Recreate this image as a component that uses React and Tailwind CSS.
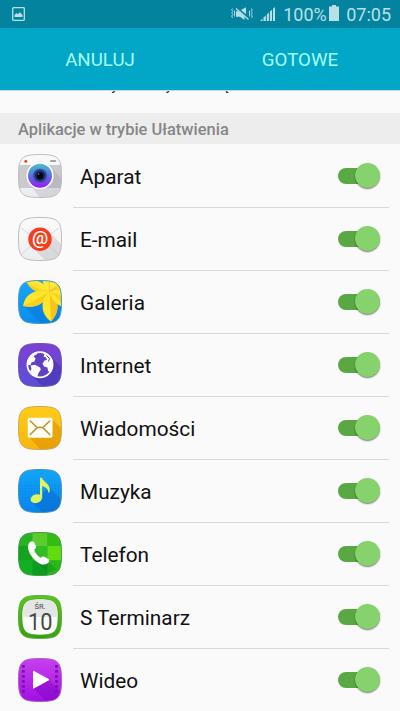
const SQUIRCLE = 'M22 .5C40.3 .5 43.5 3.7 43.5 22S40.3 43.5 22 43.5.5 40.3.5 22 3.7.5 22 .5Z';

const Tile = ({ id, from, to, edge, children }) => (
  <svg viewBox="0 0 44 44" className="size-11 shrink-0">
    <defs>
      <linearGradient id={`${id}-bg`} x1="0" y1="0" x2="0" y2="1">
        <stop offset="0" stopColor={from} />
        <stop offset="1" stopColor={to} />
      </linearGradient>
      <clipPath id={`${id}-clip`}>
        <path d={SQUIRCLE} />
      </clipPath>
    </defs>
    <path d={SQUIRCLE} fill={`url(#${id}-bg)`} />
    <g clipPath={`url(#${id}-clip)`}>{children}</g>
    <path d={SQUIRCLE} fill="none" stroke={edge} strokeWidth="1" />
  </svg>
);

const CameraIcon = () => (
  <Tile id="camera" from="#fafafa" to="#ececf0" edge="#bdbdbd">
    <defs>
      <linearGradient id="camera-lens" x1="0" y1="0" x2="0" y2="1">
        <stop offset="0" stopColor="#48c0c8" />
        <stop offset="0.45" stopColor="#5a78e0" />
        <stop offset="1" stopColor="#9818f8" />
      </linearGradient>
    </defs>
    <rect y="11" width="44" height="23" fill="#c9c9ce" />
    <path d="M31 12L44 25V44H22L13 32Z" fill="#8c8c9c" opacity="0.25" />
    <circle cx="22" cy="21.7" r="13.6" fill="#fff" />
    <circle cx="22" cy="21.7" r="12" fill="url(#camera-lens)" />
    <circle cx="22" cy="21.7" r="7" fill="#304a9c" />
    <circle cx="22" cy="21.7" r="5" fill="#202058" />
    <circle cx="22" cy="21.7" r="3.2" fill="#050510" />
    <circle cx="20.5" cy="20" r="0.8" fill="#6a88c8" />
    <circle cx="7.8" cy="7.2" r="1.5" fill="#f04830" />
    <rect x="32" y="6" width="6.2" height="2" rx="0.8" fill="#a4a4ac" />
  </Tile>
);

const MailIcon = () => (
  <Tile id="mail" from="#fbfbfb" to="#ededed" edge="#bdbdbd">
    <path d="M3 11L22 25 41 11M3 38L14 28M41 38L30 28" fill="none" stroke="#cfcfcf" strokeWidth="0.8" />
    <path d="M30.5 14L43 27V43H27L14 30.5Z" fill="#999" opacity="0.25" />
    <circle cx="22" cy="22.3" r="11.7" fill="#f73d1c" />
    <text x="22" y="27.2" textAnchor="middle" fontSize="18" fontWeight="500" fill="#fff" fontFamily="Roboto, sans-serif">
      @
    </text>
  </Tile>
);

const GalleryIcon = () => (
  <Tile id="gallery" from="#1aa6f6" to="#0a8cf0" edge="#4b9cc4">
    <path d="M6 26L31 12 44 25V44H24Z" fill="#0670d0" opacity="0.4" />
    <path d="M31.5 11.5C26 0 15-1 8 1C12 10 22 15 31.5 11.5Z" fill="#ffe52c" />
    <path d="M31.5 11.5C22 10 14 7 8 1C12 10 22 15 31.5 11.5Z" fill="#fbd01c" />
    <path d="M31.5 11.5C19 8 7 13 5 26C18 29 28 23 31.5 11.5Z" fill="#ffe52c" />
    <path d="M31.5 11.5C22 17 12 23 5 26C18 29 28 23 31.5 11.5Z" fill="#fbd01c" />
    <path d="M31.5 11.5C22 20 22 34 33 41.5C42 32 42 20 31.5 11.5Z" fill="#ffe52c" />
    <path d="M31.5 11.5C32 22 33 32 33 41.5C42 32 42 20 31.5 11.5Z" fill="#f9c216" />
    <path d="M31.5 11.5C33 20 38 25 46 27V12C41 9 36 9 31.5 11.5Z" fill="#ffe52c" />
    <path d="M31.5 11.5C36 14 42 21 46 27V17Z" fill="#fbd01c" />
    <path d="M31.5 11.5C34 4 39 0 46-2V13C41 9 36 9 31.5 11.5Z" fill="#ffd91c" />
    <path d="M31.5 11.5C26 6 24 2 25-2H41C40 4 35 8 31.5 11.5Z" fill="#ffea3c" />
    <path d="M31.5 11.5L44 4M31.5 11.5L31-1" stroke="#f6be1c" strokeWidth="0.8" />
  </Tile>
);

const InternetIcon = () => (
  <Tile id="internet" from="#7b40d2" to="#5a50d6" edge="#6a58bc">
    <path d="M32 13L44 25V44H25L13 32Z" fill="#38249c" opacity="0.4" />
    <circle cx="22" cy="21.7" r="12.6" fill="#633fc4" stroke="#fdfdfe" strokeWidth="1.8" />
    <g fill="#fdfdfe">
      <path d="M9.5 18.5C11 12.5 15 9 20 8.8L18.5 11.5 15.5 13 17.5 15.5 16.5 18.5 13.5 19.5 12.5 22 9 22Z" />
      <path d="M12.5 22.5L17 21.8 22 24.5 22.8 26.5 20.5 30 19 34.5C15.5 33.5 13 31 12 28.5L13.5 26Z" />
      <path d="M24 8.8C29 9.5 34 13.5 35 19L35 24 32.5 29.5 30 28 29.5 24.5 26 23.5 24.5 20.5 26.5 17.5 29 17 28 14.5 25.5 13.5 26.5 11.5Z" />
    </g>
    <path d="M28.5 12.5L31.5 15.5 30.5 18.5" fill="none" stroke="#633fc4" strokeWidth="1" />
  </Tile>
);

const MessagesIcon = () => (
  <Tile id="messages" from="#ffcc18" to="#f7b60c" edge="#c8a860">
    <path d="M34 13L44 23V44H23L11 31Z" fill="#d88c00" opacity="0.5" />
    <rect x="9.7" y="11.7" width="24.8" height="20" rx="1.6" fill="#fffdf4" />
    <path
      d="M12.3 15L19.2 21.6H24.8L31.7 15M12.3 28.5L19.2 21.6M31.7 28.5L24.8 21.6"
      fill="none"
      stroke="#bd902c"
      strokeWidth="1.5"
      strokeLinecap="round"
    />
  </Tile>
);

const MusicIcon = () => (
  <Tile id="music" from="#12a4f8" to="#0886ee" edge="#4a90c0">
    <defs>
      <pattern id="music-dots" width="3" height="3" patternUnits="userSpaceOnUse">
        <circle cx="1.5" cy="1.5" r="0.7" fill="#0870d8" opacity="0.5" />
      </pattern>
    </defs>
    <rect y="14" width="44" height="30" fill="url(#music-dots)" />
    <path d="M31 18L44 31V44H25L15 34 24 25Z" fill="#0660c0" opacity="0.4" />
    <ellipse cx="18.3" cy="29.7" rx="5.8" ry="4.3" transform="rotate(-18 18.3 29.7)" fill="#dcf560" />
    <path
      d="M22 8.7H24C25 13 32.5 14.5 31.8 21.5C31.5 23 31 23.5 30.3 24C30.5 19.5 27 17.7 24.2 17.2V29.5L22 28Z"
      fill="#dcf560"
    />
  </Tile>
);

const PhoneIcon = () => (
  <Tile id="phone" from="#2cbc24" to="#10a020" edge="#4a9c44">
    <rect width="14.5" height="14" fill="#24b424" />
    <rect x="14.5" width="15" height="14" fill="#5ccc2c" />
    <rect x="29.5" width="15" height="14" fill="#32bc14" />
    <rect y="14" width="14.5" height="14.5" fill="#12a41c" />
    <rect x="14.5" y="14" width="15" height="14.5" fill="#34bc24" />
    <rect x="29.5" y="14" width="15" height="14.5" fill="#60dc10" />
    <rect y="28.5" width="14.5" height="16" fill="#10b024" />
    <rect x="14.5" y="28.5" width="15" height="16" fill="#0c9c20" />
    <rect x="29.5" y="28.5" width="15" height="16" fill="#28b81c" />
    <path d="M30.5 30L38 37.5 30 41 18 29Z" fill="#087818" opacity="0.3" />
    <path
      d="M12.5 9.8C14 8.8 15.5 9.3 16.3 10.8L18 14C18.5 15.5 18 16.3 16.3 17.5C16.5 20.5 20 24.5 23 25.8C24.3 24.3 25.5 24.2 27 25L30.2 27C31.5 28 31.6 29.3 30.5 30.5C27 34 22.5 32.8 18.5 29.5C14 25.7 10.5 20.5 10 15.8C9.8 13 10.7 11 12.5 9.8Z"
      fill="#fff"
    />
  </Tile>
);

const CalendarIcon = () => (
  <Tile id="calendar" from="#58c818" to="#38a010" edge="#68a850">
    <path
      d="M22 4C36.5 4 40 7.5 40 22S36.5 40 22 40 4 36.5 4 22 7.5 4 22 4Z"
      fill="#fdfdfd"
      stroke="#38980c"
      strokeWidth="0.6"
    />
    <path d="M4.3 22C4.3 7.8 7.8 4.3 22 4.3S39.7 7.8 39.7 22Z" fill="#e5e5e7" />
    <g fill="#4a4646" fontFamily="Roboto, sans-serif" textAnchor="middle">
      <text x="22" y="13.5" fontSize="7.5">
        ŚR.
      </text>
      <text x="22.3" y="34.8" fontSize="23" textLength="24.5" lengthAdjust="spacingAndGlyphs">
        10
      </text>
    </g>
  </Tile>
);

const VideoIcon = () => (
  <Tile id="video" from="#c840ee" to="#a010e4" edge="#a860c0">
    <path d="M31 22L44 35V44H29L15 30Z" fill="#7800b8" opacity="0.4" />
    {[7, 12, 17, 22, 27, 32].map((y) => (
      <g key={y} fill="#8010b4">
        <rect x="3.8" y={y} width="3" height="2.7" rx="0.5" />
        <rect x="37" y={y} width="3" height="2.7" rx="0.5" />
      </g>
    ))}
    <path d="M15.5 13.2L31 21.7 15.5 30.2Z" fill="#fff" stroke="#fff" strokeWidth="1" strokeLinejoin="round" />
  </Tile>
);

const APPS = [
  { name: 'Aparat', Icon: CameraIcon },
  { name: 'E-mail', Icon: MailIcon },
  { name: 'Galeria', Icon: GalleryIcon },
  { name: 'Internet', Icon: InternetIcon },
  { name: 'Wiadomości', Icon: MessagesIcon },
  { name: 'Muzyka', Icon: MusicIcon },
  { name: 'Telefon', Icon: PhoneIcon },
  { name: 'S Terminarz', Icon: CalendarIcon },
  { name: 'Wideo', Icon: VideoIcon },
];

const StatusBar = () => (
  <div className="flex h-7 shrink-0 items-center bg-[#03839e] pr-[9px] pl-3 text-[#b9e0e8]">
    <svg viewBox="0 0 13 14" className="h-3.5 w-[13px]" fill="none">
      <rect x="0.7" y="0.7" width="11.6" height="12.6" rx="0.8" stroke="currentColor" strokeWidth="1.3" />
      <path d="M2.5 10V8L4.5 6 5.8 7.2 7.8 5.2 10.5 8V10Z" fill="currentColor" />
    </svg>

    {/* Vibrate / muted speaker */}
    <svg viewBox="0 0 22 14" className="ml-auto h-3.5 w-[22px]" fill="none">
      <path
        d="M1.5 1.5L.7 3 1.8 4.5 .7 6 1.8 7.5 .7 9 1.5 11M3.5 3.5V9.5M20.5 1.5L21.3 3 20.2 4.5 21.3 6 20.2 7.5 21.3 9 20.5 11M18.5 3.5V9.5"
        stroke="currentColor"
        strokeWidth="0.9"
      />
      <path d="M5 4.3H7.5L13.5 9.7V13L9 9.7H5ZM10 3L15 .3V7.3Z" fill="currentColor" />
      <path d="M5 1.5L17.5 12.5" stroke="currentColor" strokeWidth="1.3" />
    </svg>

    <svg viewBox="0 0 15 14" className="ml-[7px] h-3.5 w-[15px]" fill="currentColor">
      <path d="M0 14L2.5 11.5V14ZM3.5 10.5L5.8 8.5V14H3.5ZM6.8 7.5L8.9 5.5V14H6.8ZM9.9 4.7L12 2.7V14H9.9ZM13 1.7L15 0V14H13Z" />
    </svg>

    <span className="ml-2 w-[44px] pt-px text-[18px] leading-7 whitespace-nowrap">100%</span>
    <svg viewBox="0 0 10 16" className="mb-0.5 ml-0.5 h-4 w-2.5" fill="currentColor">
      <path d="M3 0H7V1.5H10V16H0V1.5H3Z" />
    </svg>
    <span className="ml-[7px] pt-px text-[18px] leading-7">07:05</span>
  </div>
);

const Switch = () => (
  <div className="relative h-[26px] w-[42px] shrink-0">
    <div className="mt-[5px] h-4 w-9 rounded-full bg-[#5aa843]" />
    <div className="absolute top-0 right-0 size-[25px] rounded-full bg-[#86d26d] shadow-[0_1px_1.5px_rgba(0,0,0,0.5)]" />
  </div>
);

const AppRow = ({ name, Icon }) => (
  <li className="flex h-[63px] items-stretch pr-[11px] pl-[18px]">
    <div className="flex w-[55px] items-center pb-px">
      <Icon />
    </div>
    <div className="flex flex-1 items-center justify-between border-b border-[#d9d9d9] pr-[9px] pl-[7px]">
      <span className="pt-px text-[20.8px] leading-6 text-[#111]">{name}</span>
      <Switch />
    </div>
  </li>
);

const App = () => (
  <div className="flex h-[711px] w-[400px] flex-col overflow-hidden bg-[#fafafa] font-[Roboto,sans-serif]">
    <StatusBar />

    <header className="grid h-[62px] shrink-0 grid-cols-2 items-center bg-[#02a6c7] text-center text-[18.7px] text-[#a5fcf0]">
      <button className="pt-[3px]">ANULUJ</button>
      <button className="pt-[3px]">GOTOWE</button>
    </header>

    {/* Tail of the scrolled description */}
    <div className="h-[23px] shrink-0 overflow-hidden border-t border-[#c9d9dc] pl-[101px] text-[14px] text-[#222]">
      <p className="-mt-[18px] leading-6 whitespace-nowrap">wysoce czytelnością</p>
    </div>

    <h2 className="h-[31px] shrink-0 bg-[#ededed] pl-[18px] text-[16.45px] leading-[33px] font-medium text-[#868686]">
      Aplikacje w trybie Ułatwienia
    </h2>

    <ul className="pt-px">
      {APPS.map((app) => (
        <AppRow key={app.name} {...app} />
      ))}
    </ul>
  </div>
);

export default App;
